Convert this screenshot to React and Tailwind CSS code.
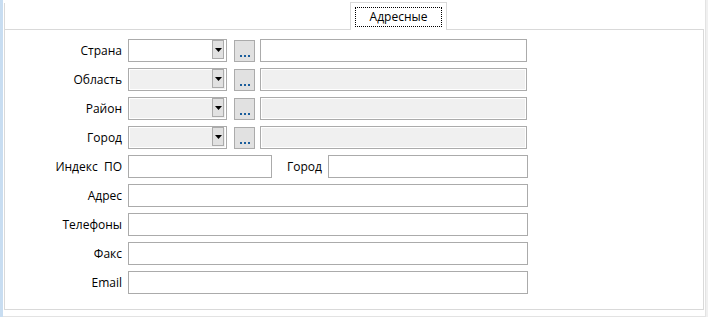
import React from "react";

const box = "h-[23px] border border-[#ababab]";
const off = "bg-[#f0f0f0] shadow-[inset_0_0_0_1px_#ffffff]";

function Label({ children }) {
  return <div className="w-[117px] mr-[6px] text-right whitespace-pre">{children}</div>;
}

function Combo({ disabled }) {
  return (
    <div className={`w-[99px] ${box} ${disabled ? off : "bg-white"} flex justify-end pr-[2px]`}>
      <div className="w-[12px] h-[19px] border border-[#ababab] bg-[#e1e1e1] flex items-center justify-center">
        <svg width="7" height="4" viewBox="0 0 7 4">
          <polygon points="0,0 7,0 3.5,4" fill="#000" />
        </svg>
      </div>
    </div>
  );
}

function Dots() {
  return (
    <div className="ml-[7px] w-[21px] h-[22px] border border-[#ababab] bg-[#e1e1e1] flex items-end justify-center pb-[4px] gap-[2px]">
      <span className="w-[2px] h-[2px] bg-[#1b5e9c]" />
      <span className="w-[2px] h-[2px] bg-[#1b5e9c]" />
      <span className="w-[2px] h-[2px] bg-[#1b5e9c]" />
    </div>
  );
}

function LookupRow({ label, disabled }) {
  return (
    <div className="flex items-center h-[23px]">
      <Label>{label}</Label>
      <Combo disabled={disabled} />
      <Dots />
      <div className={`ml-[5px] w-[267px] ${box} ${disabled ? off : "bg-white"}`} />
    </div>
  );
}

function TextRow({ label }) {
  return (
    <div className="flex items-center h-[23px]">
      <Label>{label}</Label>
      <div className={`w-[400px] ${box} bg-white`} />
    </div>
  );
}

export default function App() {
  return (
    <div className="flex w-[708px] h-[317px] bg-[#f0f0f0] text-[12px] text-black" style={{ fontFamily: '"Open Sans", "Liberation Sans", sans-serif' }}>
      <div className="w-[3px] bg-[#c8ddf1]" />
      <div className="w-[703px] h-[317px] bg-white border-r border-b border-[#e3e3e3] pl-[1px] pr-[1px] flex flex-col">
        <div className="h-[29px] flex items-end">
          <div className="w-[346px] h-[26px] border-l border-[#d9d9d9]" />
          <div className="relative z-10 -mb-px w-[97px] h-[28px] bg-white border-t border-l border-r border-[#d9d9d9] pt-[4px] pl-[4px]">
            <div className="w-[87px] h-[20px] border border-dotted border-black flex items-center justify-center">
              Адресные
            </div>
          </div>
        </div>
        <div className="h-[281px] border border-[#d9d9d9] pt-[9px] flex flex-col gap-[6px]">
          <LookupRow label="Страна" />
          <LookupRow label="Область" disabled />
          <LookupRow label="Район" disabled />
          <LookupRow label="Город" disabled />
          <div className="flex items-center h-[23px]">
            <Label>{"Индекс  ПО"}</Label>
            <div className="w-[400px] flex items-center">
              <div className={`w-[144px] ${box} bg-white`} />
              <div className="ml-[15px]">Город</div>
              <div className={`ml-auto w-[200px] ${box} bg-white`} />
            </div>
          </div>
          <TextRow label="Адрес" />
          <TextRow label="Телефоны" />
          <TextRow label="Факс" />
          <TextRow label="Email" />
        </div>
      </div>
    </div>
  );
}
